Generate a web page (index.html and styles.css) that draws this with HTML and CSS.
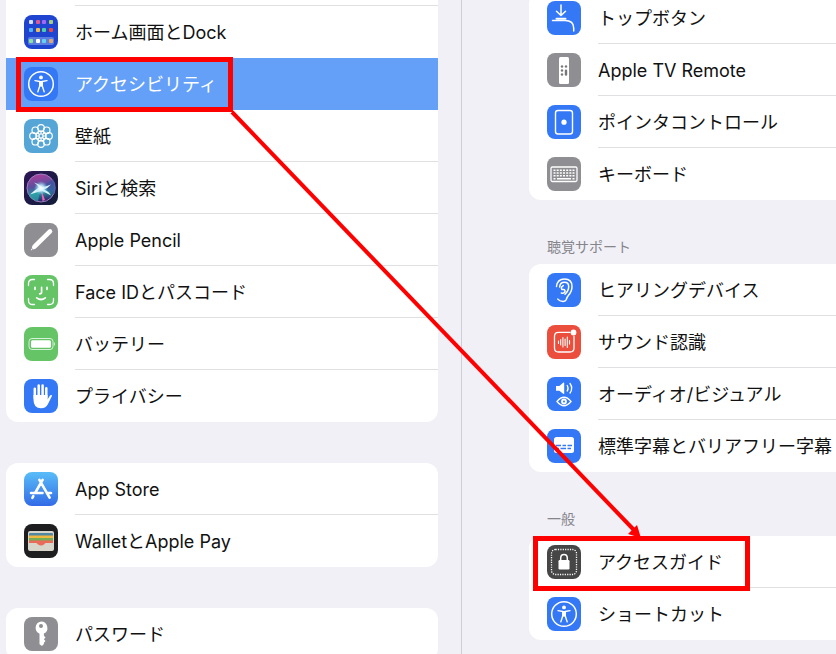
FILE: index.html
```html
<!DOCTYPE html>
<html lang="ja">
<head>
    <meta charset="UTF-8">
    <meta name="viewport" content="width=device-width, initial-scale=1.0">
    <title>設定</title>
    <link rel="stylesheet" href="styles.css">
</head>
<body>
    <div class="settings">
        <nav class="sidebar">
            <ul class="group continued">
                <li><a class="row" href="#home">
                    <svg class="icon" viewBox="0 0 34 34">
                        <rect width="34" height="34" rx="8" fill="#1f44d0"/>
                        <rect x="4" y="22" width="26" height="8" rx="2" fill="#5b7de0"/>
                        <rect x="5" y="5" width="4" height="4" rx="1" fill="#d9def5"/>
                        <rect x="12" y="5" width="4" height="4" rx="1" fill="#e0568f"/>
                        <rect x="18" y="5" width="4" height="4" rx="1" fill="#a566f5"/>
                        <rect x="25" y="5" width="4" height="4" rx="1" fill="#a9cf7b"/>
                        <rect x="5" y="13" width="4" height="4" rx="1" fill="#4eb1f5"/>
                        <rect x="12" y="13" width="4" height="4" rx="1" fill="#f3bd56"/>
                        <rect x="18" y="13" width="4" height="4" rx="1" fill="#4fd0ad"/>
                        <rect x="25" y="13" width="4" height="4" rx="1" fill="#ea4747"/>
                        <rect x="5" y="24" width="4" height="4" rx="1" fill="#8ae49c"/>
                        <rect x="12" y="24" width="4" height="4" rx="1" fill="#fff"/>
                        <rect x="18" y="24" width="4" height="4" rx="1" fill="#67d2f0"/>
                        <rect x="25" y="24" width="4" height="4" rx="1" fill="#e5a36f"/>
                    </svg>
                    <span class="label">ホーム画面とDock</span>
                </a></li>
                <li class="marked"><a class="row selected" href="#accessibility">
                    <svg class="icon" viewBox="0 0 34 34">
                        <rect width="34" height="34" rx="8" fill="#3478f6"/>
                        <circle cx="17" cy="17" r="12.3" fill="none" stroke="#fff" stroke-width="1.5"/>
                        <circle cx="17" cy="10.4" r="1.900" fill="#fff"/>
                        <path d="M11 13.600l4.800.9v4.200l-2 6.200M23 13.600l-4.800.9v4.200l2 6.200" fill="none" stroke="#fff" stroke-width="1.4" stroke-linecap="round" stroke-linejoin="round"/>
                        <path d="M15 13.900h4v5l-2 .8-2-.8z" fill="#fff"/>
                    </svg>
                    <span class="label">アクセシビリティ</span>
                </a></li>
                <li><a class="row" href="#wallpaper">
                    <svg class="icon" viewBox="0 0 34 34">
                        <rect width="34" height="34" rx="8" fill="#55a5d6"/>
                        <g fill="none" stroke="#fff" stroke-width="1.2">
                            <circle cx="17" cy="9" r="3.3"/>
                            <circle cx="22.7" cy="11.3" r="3.3"/>
                            <circle cx="25" cy="17" r="3.3"/>
                            <circle cx="22.7" cy="22.7" r="3.3"/>
                            <circle cx="17" cy="25" r="3.3"/>
                            <circle cx="11.3" cy="22.7" r="3.3"/>
                            <circle cx="9" cy="17" r="3.3"/>
                            <circle cx="11.3" cy="11.3" r="3.3"/>
                            <circle cx="17" cy="17" r="5"/>
                            <circle cx="17" cy="17" r="2"/>
                            <path d="M17 12v3M17 19v3M12 17h3M19 17h3M13.5 13.5l2 2M18.5 18.5l2 2M20.5 13.5l-2 2M15.5 18.5l-2 2"/>
                        </g>
                    </svg>
                    <span class="label">壁紙</span>
                </a></li>
                <li><a class="row" href="#siri">
                    <svg class="icon" viewBox="0 0 34 34">
                        <defs>
                            <linearGradient id="siri-bg" x1="0" y1="0" x2="1" y2="1">
                                <stop offset="0" stop-color="#2d1656"/>
                                <stop offset="1" stop-color="#101d38"/>
                            </linearGradient>
                            <linearGradient id="siri-orb" x1="0.2" y1="0" x2="0.4" y2="1">
                                <stop offset="0" stop-color="#b43d9c"/>
                                <stop offset="0.45" stop-color="#5a4f9e"/>
                                <stop offset="0.7" stop-color="#278f9d"/>
                                <stop offset="1" stop-color="#2b236a"/>
                            </linearGradient>
                            <radialGradient id="siri-glow">
                                <stop offset="0" stop-color="#fff"/>
                                <stop offset="0.4" stop-color="#d4f4ff" stop-opacity="0.8"/>
                                <stop offset="1" stop-color="#75d7ee" stop-opacity="0"/>
                            </radialGradient>
                        </defs>
                        <rect width="34" height="34" rx="8" fill="url(#siri-bg)"/>
                        <circle cx="17" cy="17" r="14" fill="url(#siri-orb)" stroke="#9d7fbd" stroke-width="1"/>
                        <path d="M18 16l11-8a14 14 0 0 1 1 15z" fill="#3a54a0" opacity=".7"/>
                        <path d="M17 16L5 25a14 14 0 0 0 9 5z" fill="#31a7ad" opacity=".7"/>
                        <path d="M17 18l1.500 12 2.500-1z" fill="#ef62b4"/>
                        <path d="M6 23.500q5-5 9-7-2-3-5-5 5 1 8 4.500 4-.5 9-2.500-3 3.500-7 5 5 2 7 6-5-3-9-4.500-6 1-12 3.500z" fill="#dff6ff"/>
                        <circle cx="17" cy="17" r="7" fill="url(#siri-glow)"/>
                    </svg>
                    <span class="label">Siriと検索</span>
                </a></li>
                <li><a class="row" href="#pencil">
                    <svg class="icon" viewBox="0 0 34 34">
                        <rect width="34" height="34" rx="8" fill="#8e8e93"/>
                        <path d="M11 23.2L26 8.4" stroke="#fff" stroke-width="4.6" stroke-linecap="round"/>
                        <path d="M8.7 22.2l3.2 3.2-2.6 1-1.5-1.5zM7.5 25.6l1.1 1.1-1.9.8z" fill="#fff"/>
                    </svg>
                    <span class="label">Apple Pencil</span>
                </a></li>
                <li><a class="row" href="#faceid">
                    <svg class="icon" viewBox="0 0 34 34">
                        <rect width="34" height="34" rx="8" fill="#65c466"/>
                        <g fill="none" stroke="#fff" stroke-linecap="round">
                            <path d="M4.5 10.5v-2q0-4 4-4h2M23.500 4.5h2q4 0 4 4v2M29.500 23.500v2q0 4-4 4h-2M10.500 29.500h-2q-4 0-4-4v-2" stroke-width="1.3"/>
                            <path d="M11 12.300v2M23 12.300v2M17.600 12.300v5q0 1.500-1.900 1.500M12.700 22.800q4.300 3.400 8.600 0" stroke-width="1.7"/>
                        </g>
                    </svg>
                    <span class="label">Face IDとパスコード</span>
                </a></li>
                <li><a class="row" href="#battery">
                    <svg class="icon" viewBox="0 0 34 34">
                        <rect width="34" height="34" rx="8" fill="#65c466"/>
                        <rect x="5" y="11.500" width="24" height="11" rx="3" fill="none" stroke="#d8f1d9" stroke-width="1"/>
                        <rect x="7" y="13.200" width="20" height="7.600" rx="1.500" fill="#fff"/>
                        <path d="M30 15q2 2 0 4z" fill="#d8f1d9"/>
                    </svg>
                    <span class="label">バッテリー</span>
                </a></li>
                <li><a class="row" href="#privacy">
                    <svg class="icon" viewBox="0 0 34 34">
                        <rect width="34" height="34" rx="8" fill="#3478f6"/>
                        <path d="M10.800 19V9.800M14.700 17V6.500M18.600 17V6.500M22.300 19V9.200" stroke="#fff" stroke-width="2.500" stroke-linecap="round"/>
                        <path d="M9.500 16h14v4.400l2.300-3.600q1-1.300 1.900-.7.500.5 0 1.500L24 25q-1.900 4.200-7 4.200-7.500 0-7.500-8.500z" fill="#fff"/>
                    </svg>
                    <span class="label">プライバシー</span>
                </a></li>
            </ul>

            <ul class="group">
                <li><a class="row" href="#appstore">
                    <svg class="icon" viewBox="0 0 34 34">
                        <defs>
                            <linearGradient id="store-bg" x1="0" y1="0" x2="0" y2="1">
                                <stop offset="0" stop-color="#59bdf8"/>
                                <stop offset="1" stop-color="#326be7"/>
                            </linearGradient>
                        </defs>
                        <rect width="34" height="34" rx="8" fill="url(#store-bg)"/>
                        <path d="M18.600 7.800L11.400 20.500M15.400 7.800L25.600 25.600M9.300 24.200l-.9 1.600M7 21h11.500M23.500 21H27" stroke="#fff" stroke-width="2.600" stroke-linecap="round"/>
                    </svg>
                    <span class="label">App Store</span>
                </a></li>
                <li><a class="row" href="#wallet">
                    <svg class="icon" viewBox="0 0 34 34">
                        <rect width="34" height="34" rx="8" fill="#1e1e20"/>
                        <rect x="4" y="7" width="26" height="20" rx="2" fill="#d8d5cb"/>
                        <rect x="5" y="9" width="24" height="4" rx="1" fill="#5187a3"/>
                        <rect x="5" y="11.500" width="24" height="3" fill="#efb83e"/>
                        <rect x="5" y="14" width="24" height="3" fill="#75ad57"/>
                        <path d="M5 16.500h24v2.500h-7q-1 0-1.700 1.200Q17 23 13.700 20.200 13 19 12 19H5z" fill="#ea6b59"/>
                    </svg>
                    <span class="label">WalletとApple Pay</span>
                </a></li>
            </ul>

            <ul class="group">
                <li><a class="row" href="#passwords">
                    <svg class="icon" viewBox="0 0 34 34">
                        <rect width="34" height="34" rx="8" fill="#8e8e93"/>
                        <path d="M17 4.500a6.400 6.400 0 0 1 2.900 12.100v2.200l1.600 1.700-1.600 1.800 1.600 1.700-1.600 1.700v1.400L18 28.900l-2.500-1.700V16.700A6.400 6.400 0 0 1 17 4.500z" fill="#fff"/>
                        <circle cx="17" cy="9" r="2" fill="#8e8e93"/>
                    </svg>
                    <span class="label">パスワード</span>
                </a></li>
            </ul>
        </nav>

        <main class="detail">
            <ul class="group">
                <li><a class="row" href="#topbutton">
                    <svg class="icon" viewBox="0 0 34 34">
                        <rect width="34" height="34" rx="8" fill="#3478f6"/>
                        <g fill="none" stroke="#fff" stroke-width="1.500" stroke-linecap="round" stroke-linejoin="round">
                            <path d="M14 4v10M9.500 10.200L14 14.500l4.500-4.300M5.500 19.500H18q8.700 0 8.700 7.500v3"/>
                            <path d="M9.500 17.800h9" stroke-width="2"/>
                        </g>
                    </svg>
                    <span class="label">トップボタン</span>
                </a></li>
                <li><a class="row" href="#remote">
                    <svg class="icon" viewBox="0 0 34 34">
                        <rect width="34" height="34" rx="8" fill="#8e8e93"/>
                        <rect x="12" y="4" width="10" height="27" rx="1.500" fill="#fff"/>
                        <g fill="#77777c">
                            <circle cx="15" cy="13.500" r="1.200"/>
                            <circle cx="19" cy="13.500" r="1.200"/>
                            <circle cx="15" cy="17.500" r="1.200"/>
                            <circle cx="15" cy="21.500" r="1.200"/>
                            <rect x="17.800" y="16.500" width="2.400" height="6.200" rx="1.200"/>
                        </g>
                    </svg>
                    <span class="label">Apple TV Remote</span>
                </a></li>
                <li><a class="row" href="#pointer">
                    <svg class="icon" viewBox="0 0 34 34">
                        <rect width="34" height="34" rx="8" fill="#3478f6"/>
                        <rect x="8.500" y="5.500" width="17" height="23.500" rx="2.500" fill="none" stroke="#fff" stroke-width="1.400"/>
                        <circle cx="17" cy="17.200" r="2.600" fill="#fff"/>
                    </svg>
                    <span class="label">ポインタコントロール</span>
                </a></li>
                <li><a class="row" href="#keyboard">
                    <svg class="icon" viewBox="0 0 34 34">
                        <rect width="34" height="34" rx="8" fill="#8e8e93"/>
                        <rect x="4" y="10" width="26" height="14.500" rx="1.500" fill="none" stroke="#fff" stroke-width="1.300"/>
                        <path d="M6.500 13.300h21M6.500 16h21M6.500 18.700h21" stroke="#fff" stroke-width="1.600" stroke-dasharray="2 1.170"/>
                        <path d="M6.500 21.700h2M10 21.700h14M25.500 21.700h2" stroke="#fff" stroke-width="1.600"/>
                    </svg>
                    <span class="label">キーボード</span>
                </a></li>
            </ul>

            <h2 class="heading">聴覚サポート</h2>
            <ul class="group">
                <li><a class="row" href="#hearing">
                    <svg class="icon" viewBox="0 0 34 34">
                        <rect width="34" height="34" rx="8" fill="#3478f6"/>
                        <g fill="none" stroke="#fff" stroke-width="1.500" stroke-linecap="round" stroke-linejoin="round">
                            <path d="M9.500 13.500Q10.300 6 17.500 6q7.500 0 7.500 7.500 0 5-3.500 8.800-1.700 2-2.200 4.200-.7 2-3.300 1.900-3.500-.2-5.200-2.300"/>
                            <path d="M12.700 14q.3-4.700 4.800-4.700 4.200 0 4.200 4.300 0 4.200-3.700 7.700"/>
                            <path d="M16.300 12.600q-2.800 1.500-1.500 3.900h1.900q2 .5 1 2.700-1 1.700-3.400.8"/>
                        </g>
                    </svg>
                    <span class="label">ヒアリングデバイス</span>
                </a></li>
                <li><a class="row" href="#sound">
                    <svg class="icon" viewBox="0 0 34 34">
                        <rect width="34" height="34" rx="8" fill="#eb4e3d"/>
                        <path d="M23 7.300H11.500q-4 0-4 4V23q0 4 4 4H23q4 0 4-4V11.500" fill="none" stroke="#fff" stroke-width="1.300" stroke-linecap="round"/>
                        <circle cx="26.500" cy="7.500" r="2.900" fill="#fff"/>
                        <path d="M11.500 16v2.500M13.700 14.500v5.500M15.900 12.500v9.500M18.100 14v6.500M20.300 12v10.500M22.500 15.500v3.500" stroke="#fff" stroke-width="1.100" stroke-linecap="round"/>
                    </svg>
                    <span class="label">サウンド認識</span>
                </a></li>
                <li><a class="row" href="#audio">
                    <svg class="icon" viewBox="0 0 34 34">
                        <rect width="34" height="34" rx="8" fill="#3478f6"/>
                        <path d="M9 9h3.300l4.200-3.400q.7-.4.700.5v10.300q0 .9-.7.500L12.300 13.800H9z" fill="#fff"/>
                        <g fill="none" stroke="#fff" stroke-width="1.300" stroke-linecap="round">
                            <path d="M20.200 8.500q1.800 3 0 5.500M23 6.500q3.400 4.700 0 9.500"/>
                            <path d="M10 24.500q7-8.500 14 0-7 8.500-14 0z"/>
                        </g>
                        <circle cx="17" cy="24.500" r="2.900" fill="#fff"/>
                        <circle cx="17" cy="24.500" r="1" fill="#3478f6"/>
                    </svg>
                    <span class="label">オーディオ/ビジュアル</span>
                </a></li>
                <li><a class="row" href="#captions">
                    <svg class="icon" viewBox="0 0 34 34">
                        <rect width="34" height="34" rx="8" fill="#3478f6"/>
                        <rect x="7" y="8" width="20" height="16" rx="2.500" fill="#fff"/>
                        <path d="M9 16.500h5M15.500 16.500h3.500M20.500 16.500H25M9 19.500h3M13.500 19.500h5.500M20.500 19.500H24" stroke="#3478f6" stroke-width="1.300"/>
                    </svg>
                    <span class="label">標準字幕とバリアフリー字幕</span>
                </a></li>
            </ul>

            <h2 class="heading">一般</h2>
            <ul class="group">
                <li class="marked"><a class="row" href="#guided">
                    <svg class="icon" viewBox="0 0 34 34">
                        <rect width="34" height="34" rx="8" fill="#464646"/>
                        <rect x="4.500" y="4.500" width="25" height="25" rx="4" fill="none" stroke="#fff" stroke-width="1.300" stroke-dasharray="1.200 1.200"/>
                        <rect x="11.500" y="15" width="11" height="9.500" rx="1.200" fill="#fff"/>
                        <path d="M13.700 15.500v-2.300q0-3.700 3.300-3.700t3.300 3.700v2.300" fill="none" stroke="#fff" stroke-width="1.500"/>
                    </svg>
                    <span class="label">アクセスガイド</span>
                </a></li>
                <li><a class="row" href="#shortcut">
                    <svg class="icon" viewBox="0 0 34 34">
                        <rect width="34" height="34" rx="8" fill="#3478f6"/>
                        <circle cx="17" cy="17" r="12.300" fill="none" stroke="#fff" stroke-width="1.500"/>
                        <circle cx="17" cy="10.400" r="1.900" fill="#fff"/>
                        <path d="M11 13.600l4.800.9v4.200l-2 6.200M23 13.600l-4.800.9v4.200l2 6.200" fill="none" stroke="#fff" stroke-width="1.400" stroke-linecap="round" stroke-linejoin="round"/>
                        <path d="M15 13.900h4v5l-2 .8-2-.8z" fill="#fff"/>
                    </svg>
                    <span class="label">ショートカット</span>
                </a></li>
            </ul>
        </main>
    </div>

    <!-- arrow between the two marked rows -->
    <svg class="arrow" aria-hidden="true">
        <path d="M232 112L634 530" stroke="#f00" stroke-width="4"/>
        <path d="M641 538l-13-4 9-9z" fill="#f00"/>
    </svg>
</body>
</html>
```

FILE: styles.css
```css
*,
*::after {
    box-sizing: border-box;
}
body {
    margin: 0;
    height: 100vh;
    overflow: hidden;
    position: relative;
    background-color: #f1f0f6;
    color: #111;
    font-family: Inter, "Noto Sans CJK JP", sans-serif;
    font-size: 18px;
}
.settings {
    display: grid;
    grid-template-columns: 21fr 17fr;
    height: 100%;
}
.sidebar {
    display: flex;
    flex-direction: column;
    gap: 41px;
    padding: 0 23px 0 6px;
    border-right: 1px solid #cfced4;
    overflow: hidden;
}
.detail {
    padding-left: 67px;
    margin-top: -8px;
    overflow: hidden;
}
.group {
    list-style: none;
    margin: 0;
    padding: 0;
    background-color: #fff;
    border-radius: 12px;
}
.detail .group {
    border-radius: 12px 0 0 12px;
}
/* the rest of this group is scrolled out above */
.continued {
    padding-top: 6px;
    border-radius: 0 0 12px 12px;
    background-image: linear-gradient(#e0e0e3, #e0e0e3);
    background-repeat: no-repeat;
    background-position: 69px 5px;
    background-size: 100% 1px;
}
.row {
    display: flex;
    align-items: center;
    gap: 17px;
    height: 52px;
    padding-left: 18px;
    color: inherit;
    text-decoration: none;
}
.icon {
    flex: none;
    width: 34px;
    height: 34px;
}
.label {
    flex: 1;
    min-width: 0;
    height: 52px;
    line-height: 54px;
    border-bottom: 1px solid #e0e0e3;
    white-space: nowrap;
    overflow: hidden;
}
li:last-child .label {
    border-bottom: none;
}
.selected {
    background-color: #65a0f8;
    color: #fff;
}
.selected .label,
li:has(+ li .selected) .label {
    border-bottom-color: transparent;
}
.heading {
    margin: 0;
    padding: 36px 0 6px 18px;
    color: #85858b;
    font-size: 14px;
    font-weight: 400;
    line-height: 22px;
}
.marked {
    position: relative;
}
.marked::after {
    content: "";
    position: absolute;
    top: -1px;
    left: 10px;
    width: 217px;
    height: 55px;
    border: 5px solid #f00;
    pointer-events: none;
}
.detail .marked::after {
    top: 0;
    left: 4px;
}
.arrow {
    position: absolute;
    top: 0;
    left: 0;
    width: 100%;
    height: 100%;
    pointer-events: none;
}
```
